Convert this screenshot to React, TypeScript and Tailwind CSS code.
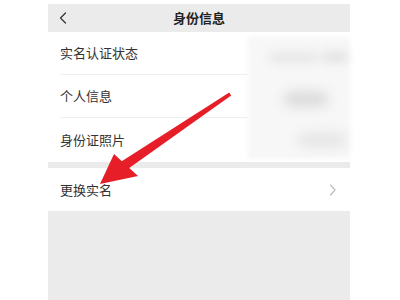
const rows = ['实名认证状态', '个人信息', '身份证照片'];

function Chevron({ dir, className }: { dir: 'left' | 'right'; className?: string }) {
  return (
    <svg width="8" height="12" viewBox="0 0 8 12" className={className} fill="none">
      <path
        d={dir === 'left' ? 'M6.5 1 L1.5 6 L6.5 11' : 'M1.5 1 L6 6 L1.5 11'}
        stroke="currentColor"
        strokeWidth="1.2"
        strokeLinecap="round"
        strokeLinejoin="round"
      />
    </svg>
  );
}

export default function App() {
  return (
    <div
      className="relative w-[400px] h-[300px] bg-white overflow-hidden"
      style={{ fontFamily: '"Noto Sans CJK SC", "Noto Sans", sans-serif' }}
    >
      <div className="ml-[48px] w-[302px] h-full flex flex-col pt-[4px]">
        {/* Header */}
        <div className="h-[28px] bg-[#ebebeb] flex items-center relative shrink-0">
          <Chevron dir="left" className="ml-[11px] text-[#333]" />
          <div className="flex-1 text-center text-[13px] font-bold text-[#222] pr-[19px]">身份信息</div>
        </div>

        {/* Info rows */}
        <div className="flex bg-white shrink-0">
          <div className="w-[200px] flex flex-col">
            {rows.map((r, i) => (
              <div key={r} className={`pl-[12px] ${i === 2 ? 'h-[44px]' : 'h-[43px]'}`}>
                <div
                  className={`h-full flex items-center text-[13px] text-[#333] ${
                    i < 2 ? 'border-b border-[#f0f0f0]' : ''
                  }`}
                >
                  {r}
                </div>
              </div>
            ))}
          </div>
          {/* Blurred (masked) values */}
          <div className="flex-1 pt-[5px] pb-[3px]">
            <div className="h-full bg-[#f7f7f7] blur-[2px] flex flex-col">
              <div className="h-[40px] flex items-center gap-[4px] pl-[22px]">
                <div className="w-[48px] h-[9px] rounded-full bg-[#e4e4e4] blur-[5px]" />
                <div className="w-[26px] h-[10px] rounded-full bg-[#e0e0e0] blur-[5px]" />
              </div>
              <div className="h-[43px] flex items-center pl-[36px]">
                <div className="w-[44px] h-[14px] rounded-full bg-[#d8d8d8] blur-[6px]" />
              </div>
              <div className="flex-1 flex items-center pl-[50px]">
                <div className="w-[48px] h-[12px] rounded-full bg-[#e2e2e2] blur-[6px]" />
              </div>
            </div>
          </div>
        </div>

        <div className="h-[6px] bg-[#ebebeb] shrink-0" />

        {/* Change name row */}
        <div className="h-[43px] bg-white flex items-center pl-[12px] pr-[13px] shrink-0">
          <div className="flex-1 text-[13px] text-[#333]">更换实名</div>
          <Chevron dir="right" className="text-[#bdbdbd]" />
        </div>

        <div className="flex-1 bg-[#ebebeb]" />
      </div>

      {/* Red annotation arrow */}
      <svg className="absolute inset-0 pointer-events-none" width="400" height="300" viewBox="0 0 400 300">
        <path d="M229.2 92.6 L231.2 95.4 L125 171 L119 163 Z" fill="#e61e28" />
        <path d="M100 184 L114 154 L138 176 Z" fill="#e61e28" />
      </svg>
    </div>
  );
}
